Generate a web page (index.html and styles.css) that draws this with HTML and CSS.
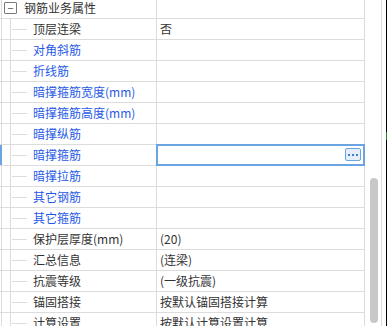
FILE: index.html
```html
<!DOCTYPE html>
<html lang="zh-CN">
<head>
    <meta charset="UTF-8">
    <title>钢筋业务属性</title>
    <link rel="stylesheet" href="styles.css">
</head>
<body>
    <div class="panel">
        <div class="grid">
            <div class="row group">
                <div class="mark"></div>
                <div class="label"><span class="toggle">−</span>钢筋业务属性</div>
                <div class="value"></div>
            </div>
            <div class="row">
                <div class="mark"></div>
                <div class="label"><span class="branch"></span>顶层连梁</div>
                <div class="value">否</div>
            </div>
            <div class="row link">
                <div class="mark"></div>
                <div class="label"><span class="branch"></span>对角斜筋</div>
                <div class="value"></div>
            </div>
            <div class="row link">
                <div class="mark"></div>
                <div class="label"><span class="branch"></span>折线筋</div>
                <div class="value"></div>
            </div>
            <div class="row link">
                <div class="mark"></div>
                <div class="label"><span class="branch"></span>暗撑箍筋宽度(mm)</div>
                <div class="value"></div>
            </div>
            <div class="row link">
                <div class="mark"></div>
                <div class="label"><span class="branch"></span>暗撑箍筋高度(mm)</div>
                <div class="value"></div>
            </div>
            <div class="row link">
                <div class="mark"></div>
                <div class="label"><span class="branch"></span>暗撑纵筋</div>
                <div class="value"></div>
            </div>
            <div class="row link selected">
                <div class="mark"></div>
                <div class="label"><span class="branch"></span>暗撑箍筋</div>
                <div class="value">
                    <div class="editor">
                        <button class="more"><i></i><i></i><i></i></button>
                    </div>
                </div>
            </div>
            <div class="row link">
                <div class="mark"></div>
                <div class="label"><span class="branch"></span>暗撑拉筋</div>
                <div class="value"></div>
            </div>
            <div class="row link">
                <div class="mark"></div>
                <div class="label"><span class="branch"></span>其它钢筋</div>
                <div class="value"></div>
            </div>
            <div class="row link">
                <div class="mark"></div>
                <div class="label"><span class="branch"></span>其它箍筋</div>
                <div class="value"></div>
            </div>
            <div class="row">
                <div class="mark"></div>
                <div class="label"><span class="branch"></span>保护层厚度(mm)</div>
                <div class="value">(20)</div>
            </div>
            <div class="row">
                <div class="mark"></div>
                <div class="label"><span class="branch"></span>汇总信息</div>
                <div class="value">(连梁)</div>
            </div>
            <div class="row">
                <div class="mark"></div>
                <div class="label"><span class="branch"></span>抗震等级</div>
                <div class="value">(一级抗震)</div>
            </div>
            <div class="row">
                <div class="mark"></div>
                <div class="label"><span class="branch"></span>锚固搭接</div>
                <div class="value">按默认锚固搭接计算</div>
            </div>
            <div class="row">
                <div class="mark"></div>
                <div class="label"><span class="branch"></span>计算设置</div>
                <div class="value">按默认计算设置计算</div>
            </div>
        </div>
        <div class="scrollbar">
            <div class="thumb"></div>
        </div>
        <div class="spacer"></div>
        <div class="edge"></div>
    </div>
</body>
</html>
```

FILE: styles.css
```css
body {
    margin: 0;
    font-family: "Noto Sans CJK SC", "Noto Sans", sans-serif;
    font-size: 12px;
    color: #333;
    background: #fff;
}
.panel {
    display: flex;
    height: 326px;
    overflow: hidden;
}
.grid {
    width: 365px;
    flex: none;
    border-right: 1px solid #dcdcdc;
    box-sizing: border-box;
    margin-top: -2px;
}
.row {
    display: flex;
    height: 21px;
    box-sizing: border-box;
    border-bottom: 1px solid #dcdcdc;
    line-height: 20px;
    white-space: nowrap;
}
.mark {
    width: 2px;
    flex: none;
    background: linear-gradient(to right, #fff 1px, #dcdcdc 1px);
}
.selected .mark {
    background: #6aa5e2;
}
.label {
    width: 155px;
    flex: none;
    box-sizing: border-box;
    border-right: 1px solid #dcdcdc;
    display: flex;
    align-items: center;
    overflow: hidden;
}
.row:not(.group) .label {
    padding-left: 8px;
}
.branch {
    width: 1px;
    align-self: stretch;
    background: #dcdcdc;
    margin-right: 22px;
    position: relative;
}
.branch::after {
    content: "";
    position: absolute;
    left: 2px;
    top: 10px;
    width: 15px;
    height: 1px;
    background: #dcdcdc;
}
.link .label {
    color: #1f5ae6;
}
.toggle {
    width: 11px;
    height: 10px;
    margin: 0 7px 0 2px;
    border: 1px solid #7a7a7a;
    border-radius: 1px;
    display: flex;
    align-items: center;
    justify-content: center;
    line-height: 10px;
    font-size: 11px;
    color: #555;
}
.value {
    flex: 1;
    padding-left: 3px;
    position: relative;
}
.editor {
    position: absolute;
    top: -1px;
    bottom: -1px;
    left: -1px;
    right: -1px;
    border: 2px solid #6aa5e2;
}
.more {
    position: absolute;
    right: 2px;
    top: 2px;
    width: 16px;
    height: 13px;
    padding: 0;
    box-sizing: border-box;
    border: 1px solid #6aa5e2;
    border-radius: 2px;
    background: #e6eef9;
    display: flex;
    align-items: center;
    justify-content: center;
    gap: 2px;
}
.more i {
    width: 2px;
    height: 2px;
    background: #3b7fd6;
}
.scrollbar {
    width: 17px;
    flex: none;
    box-sizing: border-box;
    border-right: 1px solid #dcdcdc;
    padding: 178px 0 0 5px;
}
.thumb {
    width: 8px;
    height: 145px;
    border-radius: 4px;
    background: #c8c8c8;
}
.spacer {
    width: 4px;
    flex: none;
}
.edge {
    width: 1px;
    flex: none;
    background: linear-gradient(to bottom, #000 132px, #1a8a1a 132px, #1a8a1a 140px, #000 140px);
}
```
